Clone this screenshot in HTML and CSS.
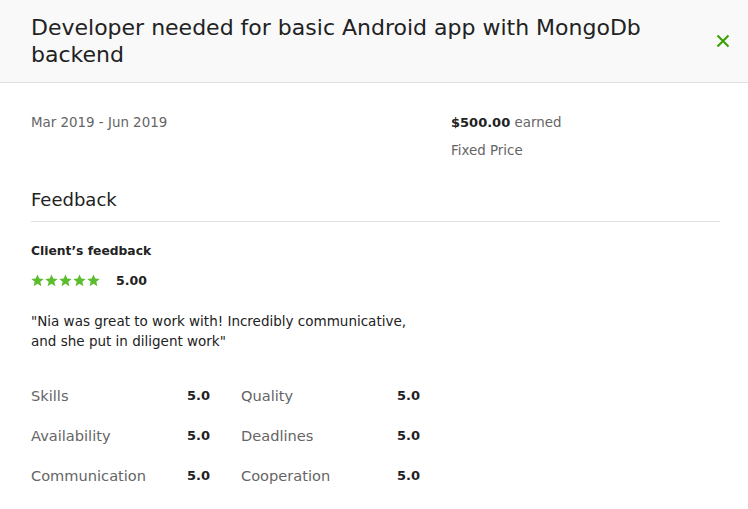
FILE: index.html
```html
<!DOCTYPE html>
<html>
<head>
<meta charset="utf-8">
<link rel="stylesheet" href="styles.css">
</head>
<body>
<div class="modal">
  <header class="head">
    <h1 class="title">Developer needed for basic Android app with MongoDb backend</h1>
    <button class="close" aria-label="Close">
      <svg width="16" height="16" viewBox="0 0 16 16"><path d="M2.5 2.5L13.5 13.5M13.5 2.5L2.5 13.5" stroke="#37a000" stroke-width="2" fill="none"/></svg>
    </button>
  </header>
  <main class="body">
    <div class="meta">
      <div class="dates">Mar 2019 - Jun 2019</div>
      <div class="price">
        <div><b>$500.00</b> earned</div>
        <div class="type">Fixed Price</div>
      </div>
    </div>
    <h2 class="section">Feedback</h2>
    <h3 class="sub">Client’s feedback</h3>
    <div class="rating">
      <span class="stars">
        <svg width="70" height="13" viewBox="0 0 70 13">
          <defs><path id="s" d="M6.5 0.5L8.3 4.6L12.7 4.9L9.3 7.8L10.4 12.2L6.5 9.8L2.6 12.2L3.7 7.8L0.3 4.9L4.7 4.6Z"/></defs>
          <use href="#s" x="0" fill="#5bbc2e"/>
          <use href="#s" x="14" fill="#5bbc2e"/>
          <use href="#s" x="28" fill="#5bbc2e"/>
          <use href="#s" x="42" fill="#5bbc2e"/>
          <use href="#s" x="56" fill="#5bbc2e"/>
        </svg>
      </span>
      <b class="score">5.00</b>
    </div>
    <p class="quote">"Nia was great to work with! Incredibly communicative, and she put in diligent work"</p>
    <div class="scores">
      <div class="pair"><span class="lbl">Skills</span><b class="val">5.0</b></div>
      <div class="pair"><span class="lbl">Quality</span><b class="val">5.0</b></div>
      <div class="pair"><span class="lbl">Availability</span><b class="val">5.0</b></div>
      <div class="pair"><span class="lbl">Deadlines</span><b class="val">5.0</b></div>
      <div class="pair"><span class="lbl">Communication</span><b class="val">5.0</b></div>
      <div class="pair"><span class="lbl">Cooperation</span><b class="val">5.0</b></div>
    </div>
  </main>
</div>
</body>
</html>
```

FILE: styles.css
```css
html, body { margin: 0; padding: 0; background: #fff; }
body { font-family: "DejaVu Sans", sans-serif; color: #222; }
.modal { width: 748px; }
.head {
  background: #f9f9f9;
  border-bottom: 1px solid #e0e0e0;
  height: 83px;
  box-sizing: border-box;
  display: flex;
  align-items: center;
  padding: 0 17px 0 31px;
}
.title {
  margin: 0;
  flex: 1;
  font-size: 22px;
  font-weight: 400;
  line-height: 27px;
  color: #222;
  max-width: 650px;
}
.close {
  background: none; border: 0; padding: 0;
  width: 16px; height: 16px;
  margin-left: auto;
  display: flex;
}
.body { padding: 0 28px 0 31px; }
.meta { display: flex; padding-top: 30px; font-size: 13.4px; color: #656565; }
.dates { width: 420px; line-height: 20px; }
.price { line-height: 20px; display: flex; flex-direction: column; gap: 8px; }
.price b { color: #222; font-size: 13px; }
.section {
  margin: 28px 0 0;
  font-size: 18px;
  font-weight: 400;
  color: #222;
  line-height: 22px;
  padding-bottom: 10px;
  border-bottom: 1px solid #e0e0e0;
}
.sub { margin: 19px 0 0; font-size: 12.3px; font-weight: 700; line-height: 20px; color: #222; }
.rating { display: flex; align-items: center; margin-top: 9px; height: 20px; }
.stars { display: flex; }
.score { margin-left: 15px; font-size: 12.5px; color: #222; }
.quote { margin: 21px 0 0; font-size: 13.5px; line-height: 20px; color: #222; width: 390px; }
.scores {
  margin-top: 35px;
  display: grid;
  grid-template-columns: 179px 179px;
  column-gap: 31px;
  row-gap: 20px;
  font-size: 14.6px;
  line-height: 20px;
}
.pair { display: flex; justify-content: space-between; }
.lbl { color: #656565; }
.val { color: #222; font-size: 13px; }
```
